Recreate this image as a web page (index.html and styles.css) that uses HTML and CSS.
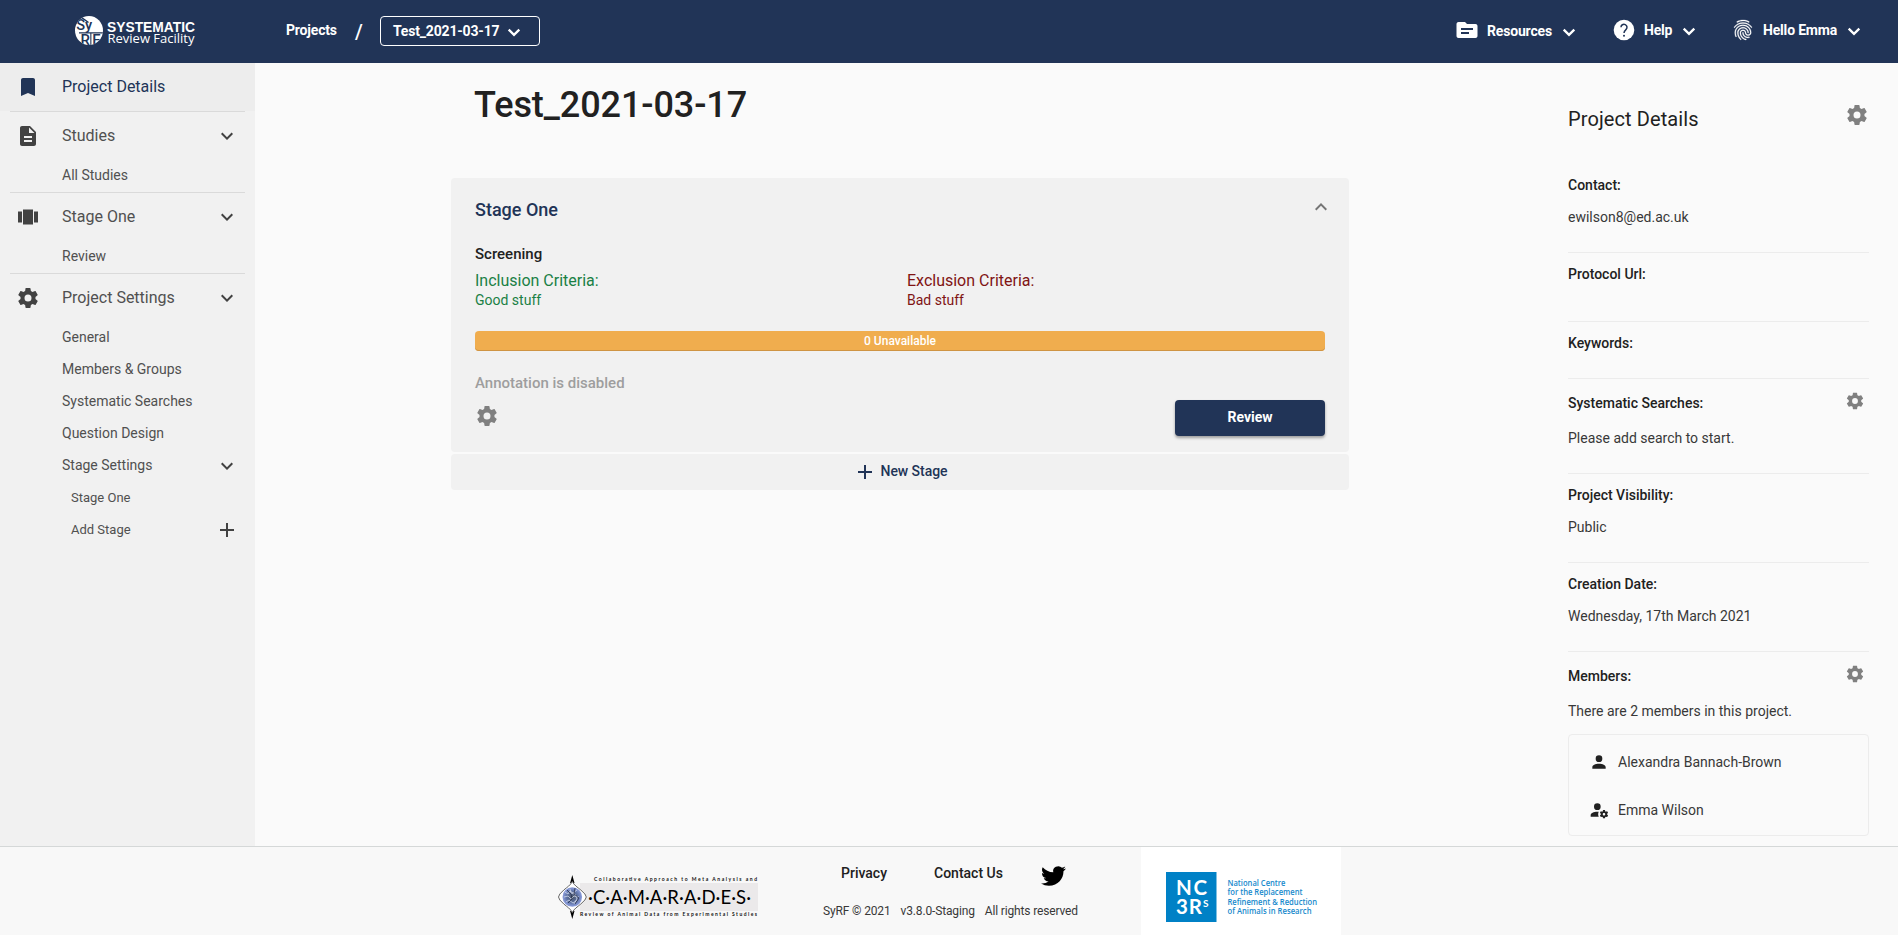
FILE: index.html
```html
<!DOCTYPE html>
<html lang="en">
<head>
<meta charset="utf-8">
<title>SyRF - Test_2021-03-17</title>
<link rel="stylesheet" href="styles.css">
</head>
<body>
<svg width="0" height="0" class="defs">
  <symbol id="cog" viewBox="0 0 24 24"><path d="M12 15.5A3.5 3.5 0 0 1 8.5 12 3.5 3.5 0 0 1 12 8.5a3.5 3.5 0 0 1 3.5 3.5 3.5 3.5 0 0 1-3.5 3.5m7.43-2.53c.04-.32.07-.64.07-.97 0-.33-.03-.66-.07-1l2.11-1.63c.19-.15.24-.42.12-.64l-2-3.46c-.12-.22-.39-.31-.61-.22l-2.49 1c-.52-.39-1.06-.73-1.69-.98l-.37-2.65A.506.506 0 0 0 14 2h-4c-.25 0-.46.18-.5.42l-.37 2.65c-.63.25-1.17.59-1.69.98l-2.49-1c-.22-.09-.49 0-.61.22l-2 3.46c-.13.22-.07.49.12.64L4.57 11c-.04.34-.07.67-.07 1 0 .33.03.65.07.97l-2.11 1.66c-.19.15-.25.42-.12.64l2 3.46c.12.22.39.3.61.22l2.49-1.01c.52.4 1.06.74 1.69.99l.37 2.65c.04.24.25.42.5.42h4c.25 0 .46-.18.5-.42l.37-2.65c.63-.26 1.17-.59 1.69-.99l2.49 1.01c.22.08.49 0 .61-.22l2-3.46c.12-.22.07-.49-.12-.64l-2.11-1.66Z"/></symbol>
  <symbol id="chevron" viewBox="0 0 24 24"><path d="M7.41 8.58 12 13.17l4.59-4.59L18 10l-6 6-6-6z"/></symbol>
  <symbol id="chevron-bold" viewBox="0 0 24 24"><path d="M6.700 9.600l5.300 5.300 5.300-5.300" fill="none" stroke="currentColor" stroke-width="2.300"/></symbol>
  <symbol id="plus" viewBox="0 0 24 24"><path d="M19 13h-6v6h-2v-6H5v-2h6V5h2v6h6z"/></symbol>
</svg>

<header class="topbar">
  <a class="brand">
    <svg width="122" height="34" viewBox="0 0 122 34">
      <defs><clipPath id="disc"><ellipse cx="14" cy="16.5" rx="14" ry="14.500"/></clipPath></defs>
      <ellipse cx="14" cy="16.5" rx="14" ry="14.500" fill="#fff"/>
      <g clip-path="url(#disc)" fill="#213457" font-family="Roboto, sans-serif" font-weight="500">
        <text x="1.200" y="16" font-size="15" textLength="16" lengthAdjust="spacingAndGlyphs">Sy</text>
        <text x="5.400" y="30.500" font-size="15" textLength="20" lengthAdjust="spacing">RF</text>
        <path d="M4 18.300h24v1.200H4zM15.300 19h1.100v12h-1.100zM7 3l7 5-1 1-7-5z"/>
      </g>
      <text x="32" y="17.500" fill="#fff" font-family="Liberation Sans, Arial, sans-serif" font-weight="700" font-size="13.800" textLength="88" lengthAdjust="spacingAndGlyphs">SYSTEMATIC</text>
      <text x="32.500" y="29" fill="#fff" font-family="Open Sans, sans-serif" font-weight="400" font-size="13" textLength="87" lengthAdjust="spacingAndGlyphs">Review Facility</text>
    </svg>
  </a>
  <nav class="crumbs">
    <a class="crumb">Projects</a>
    <span class="slash">/</span>
    <button class="crumb-select"><span>Test_2021-03-17</span><svg class="i24"><use href="#chevron-bold"/></svg></button>
  </nav>
  <nav class="user-nav">
    <a class="menu menu-low menu-resources">
      <svg class="i24 lead" viewBox="0 0 24 24"><path d="M20.5 6H12l-2-2H3.500c-1 0-2 .9-2 2v12c0 1.100.9 2 2 2h17c1.100 0 2-.9 2-2V8c0-1.100-.9-2-2-2zm-6.500 10H6v-2h8v2zm4-4H6v-2h12v2z"/></svg>
      <span>Resources</span><svg class="i24"><use href="#chevron-bold"/></svg>
    </a>
    <a class="menu menu-help">
      <svg class="i24 lead" viewBox="0 0 24 24"><circle cx="12" cy="12" r="10.300"/><path d="M9 9.300a3 3 0 1 1 4.900 2.300C12.700 12.600 12 13.200 12 15" fill="none" stroke="#213457" stroke-width="1.500"/><circle cx="12" cy="17.700" r="1" fill="#213457"/></svg>
      <span>Help</span><svg class="i24"><use href="#chevron-bold"/></svg>
    </a>
    <a class="menu menu-user">
      <svg class="i24 lead print" viewBox="0 0 24 24"><path d="M17.810 4.470c-.08 0-.16-.02-.23-.06C15.660 3.420 14 3 12.010 3c-1.980 0-3.860.47-5.570 1.410-.24.13-.54.04-.68-.2-.13-.24-.04-.55.2-.68C7.820 2.520 9.860 2 12.010 2c2.130 0 3.990.47 6.030 1.520.25.13.34.43.21.67-.09.18-.26.28-.44.28zM3.500 9.720c-.1 0-.2-.03-.29-.09-.23-.16-.28-.47-.12-.7.99-1.400 2.250-2.500 3.750-3.270C9.980 4.040 14 4.030 17.150 5.650c1.500.77 2.760 1.860 3.750 3.250.16.22.11.54-.12.7-.23.16-.54.11-.7-.12-.9-1.260-2.040-2.250-3.390-2.940-2.870-1.470-6.540-1.470-9.400.01-1.360.7-2.500 1.700-3.400 2.960-.08.14-.23.21-.39.21zm6.250 12.070c-.13 0-.26-.05-.35-.15-.87-.87-1.340-1.430-2.010-2.640-.69-1.230-1.050-2.730-1.050-4.340 0-2.970 2.540-5.390 5.660-5.390s5.660 2.420 5.660 5.390c0 .28-.22.5-.5.5s-.5-.22-.5-.5c0-2.420-2.090-4.390-4.660-4.390-2.570 0-4.660 1.970-4.660 4.390 0 1.440.32 2.770.93 3.850.64 1.150 1.080 1.640 1.850 2.420.19.2.19.51 0 .71-.11.1-.24.15-.37.15zm7.170-1.850c-1.190 0-2.240-.3-3.100-.89-1.490-1.010-2.380-2.650-2.380-4.390 0-.28.22-.5.5-.5s.5.22.5.5c0 1.410.72 2.740 1.940 3.560.71.48 1.540.71 2.540.71.24 0 .64-.03 1.040-.1.27-.05.53.13.58.41.05.27-.13.53-.41.58-.57.11-1.070.12-1.210.12zM14.910 22c-.04 0-.09-.01-.13-.02-1.590-.44-2.630-1.030-3.720-2.100-1.400-1.390-2.170-3.240-2.170-5.220 0-1.620 1.380-2.940 3.080-2.940 1.700 0 3.080 1.320 3.080 2.940 0 1.070.93 1.940 2.080 1.940s2.080-.87 2.080-1.940c0-3.770-3.250-6.830-7.250-6.830-2.840 0-5.440 1.580-6.610 4.030-.39.81-.59 1.760-.59 2.800 0 .78.07 2.010.67 3.610.1.26-.03.55-.29.64-.26.1-.55-.04-.64-.29-.49-1.310-.73-2.610-.73-3.960 0-1.200.23-2.290.68-3.240 1.330-2.790 4.280-4.600 7.510-4.600 4.550 0 8.250 3.510 8.250 7.830 0 1.620-1.380 2.940-3.080 2.940s-3.080-1.320-3.080-2.940c0-1.070-.93-1.940-2.080-1.940s-2.080.87-2.080 1.940c0 1.710.66 3.310 1.870 4.510.95.94 1.860 1.460 3.270 1.850.27.07.42.35.35.61-.05.23-.26.38-.47.38z"/></svg>
      <span>Hello Emma</span><svg class="i24"><use href="#chevron-bold"/></svg>
    </a>
  </nav>
</header>

<div class="body">
  <aside class="sidebar">
    <a class="nav-item active"><svg class="i24 lead" viewBox="0 0 24 24"><path d="M17 3H7c-1.100 0-2 .9-2 2v16l7-3 7 3V5c0-1.100-.9-2-2-2z"/></svg><span class="label">Project Details</span></a>
    <hr>
    <a class="nav-item"><svg class="i24 lead" viewBox="0 0 24 24"><path d="M14 2H6c-1.100 0-2 .9-2 2v16c0 1.100.9 2 2 2h12c1.100 0 2-.9 2-2V8l-6-6zm2 16H8v-2h8v2zm0-4H8v-2h8v2zm-3-5V3.500L18.500 9H13z"/></svg><span class="label">Studies</span><svg class="i24"><use href="#chevron"/></svg></a>
    <a class="sub"><span class="label">All Studies</span></a>
    <hr>
    <a class="nav-item"><svg class="i24 lead" viewBox="0 0 24 24"><path d="M7 19.500h10V4.500H7v15zm-5-2h4V6.500H2v11zM18 6.500v11h4V6.500h-4z"/></svg><span class="label">Stage One</span><svg class="i24"><use href="#chevron"/></svg></a>
    <a class="sub"><span class="label">Review</span></a>
    <hr>
    <a class="nav-item"><svg class="i24 lead"><use href="#cog"/></svg><span class="label">Project Settings</span><svg class="i24"><use href="#chevron"/></svg></a>
    <a class="sub"><span class="label">General</span></a>
    <a class="sub"><span class="label">Members &amp; Groups</span></a>
    <a class="sub"><span class="label">Systematic Searches</span></a>
    <a class="sub"><span class="label">Question Design</span></a>
    <a class="sub"><span class="label">Stage Settings</span><svg class="i24"><use href="#chevron"/></svg></a>
    <a class="sub deep"><span class="label">Stage One</span></a>
    <a class="sub deep"><span class="label">Add Stage</span><svg class="i24"><use href="#plus"/></svg></a>
  </aside>

  <main class="main">
    <h1>Test_2021-03-17</h1>
    <section class="stage">
      <div class="stage-head"><h2>Stage One</h2><svg class="i24 collapse"><use href="#chevron"/></svg></div>
      <h3>Screening</h3>
      <div class="criteria">
        <div class="include"><div class="crit-title">Inclusion Criteria:</div><div class="crit-text">Good stuff</div></div>
        <div class="exclude"><div class="crit-title">Exclusion Criteria:</div><div class="crit-text">Bad stuff</div></div>
      </div>
      <div class="progress">0 Unavailable</div>
      <div class="disabled">Annotation is disabled</div>
      <div class="stage-actions"><svg class="i24 gear"><use href="#cog"/></svg><button class="review">Review</button></div>
    </section>
    <button class="new-stage"><svg class="i24"><use href="#plus"/></svg><span>New Stage</span></button>
  </main>

  <aside class="details">
    <div class="details-head"><h2>Project Details</h2><svg class="i24 gear"><use href="#cog"/></svg></div>
    <section class="first"><h4>Contact:</h4><p>ewilson8@ed.ac.uk</p></section>
    <section class="empty"><h4>Protocol Url:</h4></section>
    <section><h4>Keywords:</h4></section>
    <section class="tools"><div class="row"><h4>Systematic Searches:</h4><svg class="i20 gear"><use href="#cog"/></svg></div><p>Please add search to start.</p></section>
    <section><h4>Project Visibility:</h4><p>Public</p></section>
    <section><h4>Creation Date:</h4><p>Wednesday, 17th March 2021</p></section>
    <section class="tools members"><div class="row"><h4>Members:</h4><svg class="i20 gear"><use href="#cog"/></svg></div><p>There are 2 members in this project.</p>
      <ul class="member-list">
        <li><svg class="i20" viewBox="0 0 24 24"><path d="M12 4a4 4 0 0 1 4 4 4 4 0 0 1-4 4 4 4 0 0 1-4-4 4 4 0 0 1 4-4m0 10c4.420 0 8 1.790 8 4v2H4v-2c0-2.210 3.580-4 8-4z"/></svg><span>Alexandra Bannach-Brown</span></li>
        <li><svg class="i20" viewBox="0 0 24 24"><path d="M10 4a4 4 0 1 0 0 8 4 4 0 0 0 0-8M17 12C16.870 12 16.760 12.090 16.740 12.210L16.550 13.530C16.250 13.660 15.960 13.820 15.700 14L14.460 13.500C14.350 13.500 14.220 13.500 14.150 13.630L13.150 15.360C13.090 15.470 13.110 15.600 13.210 15.680L14.270 16.500C14.250 16.670 14.240 16.830 14.240 17C14.240 17.170 14.250 17.330 14.270 17.500L13.210 18.320C13.120 18.400 13.090 18.530 13.150 18.640L14.150 20.370C14.210 20.500 14.340 20.500 14.460 20.500L15.700 20C15.960 20.180 16.240 20.350 16.550 20.470L16.740 21.790C16.760 21.910 16.860 22 17 22H19C19.110 22 19.220 21.910 19.240 21.790L19.430 20.470C19.730 20.340 20 20.180 20.270 20L21.500 20.500C21.630 20.500 21.760 20.500 21.830 20.370L22.830 18.640C22.890 18.530 22.860 18.400 22.770 18.320L21.700 17.500C21.720 17.330 21.740 17.170 21.740 17C21.740 16.830 21.730 16.670 21.700 16.500L22.760 15.680C22.850 15.600 22.880 15.470 22.820 15.360L21.820 13.630C21.760 13.500 21.630 13.500 21.500 13.500L20.270 14C20 13.820 19.730 13.650 19.420 13.530L19.230 12.210C19.220 12.090 19.110 12 19 12H17M10 14C5.580 14 2 15.790 2 18V20H11.680A7 7 0 0 1 11 17 7 7 0 0 1 11.640 14.090C11.110 14.030 10.560 14 10 14M18 15.500C18.830 15.500 19.500 16.170 19.500 17C19.500 17.840 18.830 18.500 18 18.500C17.160 18.500 16.500 17.840 16.500 17C16.500 16.170 17.170 15.500 18 15.500Z"/></svg><span>Emma Wilson</span></li>
      </ul>
    </section>
  </aside>
</div>

<footer class="footer">
  <svg class="camarades" width="202" height="46" viewBox="0 0 202 46">
    <defs><radialGradient id="globe"><stop offset="0" stop-color="#4a5568"/><stop offset=".6" stop-color="#5f74a6"/><stop offset="1" stop-color="#8fa0e0"/></radialGradient></defs>
    <rect x="22" y="9" width="178" height="28" fill="#ebe9ea"/>
    <path d="M14.300 1l2.200 8H12.100zM14.300 45l2.200-8H12.100z" fill="#000"/>
    <path d="M14.300 7.500c2 4 5 5.500 8.500 8.500q5.500 4.500 5.500 7t-5.500 7c-3.500 3-6.500 4.500-8.500 8.500-2-4-5-5.500-8.500-8.500Q.5 25.500.5 23t5.300-7c3.500-3 6.500-4.500 8.500-8.500z" fill="#fff" stroke="#666" stroke-width="1"/>
    <circle cx="14.300" cy="23" r="9.800" fill="url(#globe)"/>
    <path d="M7 18l3 2 2-3 3 2 4-3M6 23l4-1 3 3 3-3 5 1M8 28l3-2 4 3 4-3M12 15l1 4 4 1 2 5-3 5" fill="none" stroke="#dfe5f2" stroke-width=".7"/>
    <path d="M9 16l4 4 1 5-4 4M17 14l-1 6 5 4-4 6" fill="none" stroke="#28304a" stroke-width=".8"/>
    <g font-family="Lato, sans-serif" fill="#111">
      <text x="36" y="6.800" font-size="5" font-weight="700" textLength="163">Collaborative Approach to Meta Analysis and</text>
      <text x="22" y="42" font-size="5" font-weight="700" textLength="177">Review of Animal Data from Experimental Studies</text>
      <text x="30" y="30" font-size="18.500" fill="#000" textLength="163" lengthAdjust="spacing">·C·A·M·A·R·A·D·E·S·</text>
    </g>
  </svg>
  <div class="foot-mid">
    <div class="foot-links"><a>Privacy</a><a>Contact Us</a><svg width="25" height="24" viewBox="0 0 24 24" preserveAspectRatio="none"><path d="M23.953 4.570a10 10 0 01-2.825.775 4.958 4.958 0 002.163-2.723c-.951.555-2.005.959-3.127 1.184a4.920 4.920 0 00-8.384 4.482C7.690 8.095 4.067 6.130 1.640 3.162a4.822 4.822 0 00-.666 2.475c0 1.710.87 3.213 2.188 4.096a4.904 4.904 0 01-2.228-.616v.06a4.923 4.923 0 003.946 4.827 4.996 4.996 0 01-2.212.085 4.936 4.936 0 004.604 3.417 9.867 9.867 0 01-6.102 2.105c-.39 0-.779-.023-1.170-.067a13.995 13.995 0 007.557 2.209c9.053 0 13.998-7.496 13.998-13.985 0-.21 0-.42-.015-.63A9.935 9.935 0 0024 4.590z"/></svg></div>
    <div class="foot-legal"><span>SyRF © 2021</span><span>v3.8.0-Staging</span><span>All rights reserved</span></div>
  </div>
  <div class="nc3rs">
    <svg width="160" height="50" viewBox="0 0 160 50">
      <rect width="50.500" height="50" fill="#0081c6"/>
      <g fill="#fff" font-family="Lato, sans-serif" font-weight="700">
        <text x="10" y="22.800" font-size="20.500" textLength="31" lengthAdjust="spacing">NC</text>
        <text x="10" y="42.300" font-size="20.500" textLength="26" lengthAdjust="spacing">3R</text>
        <text x="37" y="34.500" font-size="10">S</text>
      </g>
      <g fill="#1689cc" font-family="Open Sans, sans-serif" font-weight="600" font-size="8.300">
        <text x="61.500" y="13.600" textLength="58" lengthAdjust="spacingAndGlyphs">National Centre</text>
        <text x="61.500" y="23.100" textLength="75" lengthAdjust="spacingAndGlyphs">for the Replacement</text>
        <text x="61.500" y="32.600" textLength="89.500" lengthAdjust="spacingAndGlyphs">Refinement &amp; Reduction</text>
        <text x="61.500" y="42.100" textLength="84" lengthAdjust="spacingAndGlyphs">of Animals in Research</text>
      </g>
    </svg>
  </div>
</footer>
</body>
</html>
```
FILE: styles.css
```css
* { box-sizing: border-box; }
body { margin: 0; height: 935px; display: flex; flex-direction: column; overflow: hidden; background: #fafafa; color: #212121; font: 400 14px/20px Roboto, sans-serif; }
h1, h2, h3, h4, p, ul { margin: 0; padding: 0; font-weight: 500; }
button { font: inherit; letter-spacing: inherit; border: 0; background: none; padding: 0; color: inherit; }
svg { display: block; flex: none; fill: currentColor; }
.defs { position: absolute; }
.i24 { width: 24px; height: 24px; }
.i20 { width: 20px; height: 20px; }
.gear { color: #808080; }
span, a, h1, h2, h3, h4, p { white-space: nowrap; }

.topbar { height: 63px; flex: none; display: flex; background: #213457; color: #fff; font-weight: 700; letter-spacing: -.18px; }
.brand { width: 286px; padding: 14px 0 0 75px; letter-spacing: 0; }
.crumbs { flex: 1; display: flex; align-items: flex-start; }
.crumb { width: 69px; padding-top: 20px; }
.slash { width: 25px; padding-top: 22px; font-size: 20px; font-weight: 500; }
.crumb-select { display: flex; align-items: center; gap: 3px; width: 160px; height: 30px; margin-top: 16px; padding: 0 0 0 12px; border: 1px solid #fff; border-radius: 4px; }
.crumb-select .i24 { margin-top: 2px; }
.user-nav { display: flex; }
.menu { display: flex; height: 60px; align-items: center; }
.menu-low span { padding-top: 2px; }
.menu .i24:last-child { margin-top: 2px; }
.menu-low .i24:last-child { margin-top: 4px; }
.menu-resources { width: 157px; }
.menu-help { width: 119px; }
.menu-user { width: 166px; }
.menu .lead { margin: 0 8px 0 -1px; }
.menu span { margin-right: 5px; }
.print { stroke: #fff; stroke-width: .3px; }

.body { height: 783px; flex: none; display: flex; }
.sidebar { width: 255px; flex: none; background: #f1f1f1; color: #505050; font-weight: 400; }
.sidebar svg { color: #424242; }
.sidebar hr { height: 1px; margin: 0 10px; border: 0; background: #dadada; }
.nav-item { display: flex; align-items: center; height: 48px; padding: 0 16px; font-size: 16px; }
.nav-item .lead { margin-right: 22px; }
.label { flex: 1; }
.active { background: #ededed; color: #213457; }
.sidebar .active svg { color: #213457; }
.sub { display: flex; align-items: center; height: 32px; padding: 0 16px 0 62px; }
.sub .label { padding-bottom: 2px; }
.deep { padding-left: 71px; font-size: 13px; }
.deep .label { padding-bottom: 0; }

.main { width: 898px; margin-left: 196px; }
h1 { padding: 22px 0 0 23px; font-size: 36px; line-height: 40px; height: 115px; letter-spacing: -.08px; }
.stage { height: 274px; padding: 20px 24px 0; background: #f1f1f1; border-radius: 4px; }
.stage-head { display: flex; justify-content: space-between; height: 45px; color: #213457; }
.stage-head h2 { font-size: 18px; line-height: 24px; }
.collapse { transform: rotate(180deg); margin: -3px -8px 0 0; color: #757575; }
h3 { font-size: 15px; line-height: 22px; }
.criteria { display: grid; grid-template-columns: 432px 1fr; height: 66px; padding-top: 6px; font-weight: 400; }
.crit-title { font-size: 16px; line-height: 20px; }
.crit-text { line-height: 19px; }
.include { color: #1a8045; }
.exclude { color: #801414; }
.progress { height: 20px; border-radius: 4px; background: #f0ad4e; box-shadow: inset 0 -1px 0 #cf9443; color: #fff; font-size: 12px; font-weight: 500; text-align: center; }
.disabled { margin-top: 22px; font-size: 15px; font-weight: 500; color: #9e9e9e; }
.stage-actions { display: flex; justify-content: space-between; margin-top: 7px; }
.stage-actions .gear { margin: 4px 0 0 0; }
.review { width: 150px; height: 36px; border-radius: 4px; background: #213457; color: #fff; font-weight: 700; box-shadow: 0 2px 3px rgba(0,0,0,.35); padding-bottom: 2px; }
.new-stage { display: flex; align-items: center; justify-content: center; gap: 4px; width: 100%; height: 36px; margin-top: 2px; border-radius: 4px; background: #f1f1f1; color: #213457; font-weight: 500; letter-spacing: -.05px; }
.new-stage span { padding-bottom: 2px; }

.details { width: 301px; margin: 0 29px 0 auto; }
.details-head { display: flex; justify-content: space-between; height: 112px; padding-top: 40px; }
.details-head h2 { font-size: 20px; font-weight: 400; line-height: 32px; letter-spacing: .1px; }
.details section { border-bottom: 1px solid #ececec; padding: 11px 0 25px; }
.details section.first { padding-top: 0; }
.details section.empty { padding-bottom: 37px; }
.details section.tools { padding-top: 14px; }
.details h4 { font-size: 14px; }
.details p { margin-top: 12px; font-weight: 400; color: #383838; }
.details .tools p { margin-top: 15px; }
.row { display: flex; justify-content: space-between; height: 20px; padding-right: 4px; }
.row .gear { margin-top: -2px; }
.details section.members { border: 0; padding-bottom: 0; }
.member-list { height: 102px; margin-top: 13px; padding: 3px 0 0 20px; border: 1px solid #ececec; border-radius: 4px; list-style: none; font-weight: 400; }
.member-list li { display: flex; align-items: center; gap: 9px; height: 48px; }
.member-list span { color: #383838; }

.footer { height: 89px; flex: none; display: flex; border-top: 1px solid #d5d8d8; background: #f8f8f8; }
.camarades { margin: 27px 0 0 558px; }
.foot-mid { width: 318px; margin-left: 63px; }
.foot-links { display: flex; height: 52px; padding: 16px 0 0 18px; font-weight: 500; }
.foot-links a:nth-child(1) { width: 93px; }
.foot-links a:nth-child(2) { width: 107px; }
.foot-links svg { color: #000; margin-top: 1px; }
.foot-legal { display: flex; gap: 10px; padding-top: 2px; font-size: 12px; font-weight: 400; letter-spacing: -.15px; color: #383838; }
.nc3rs { width: 200px; padding: 25px 0 0 25px; background: #fff; }
```
